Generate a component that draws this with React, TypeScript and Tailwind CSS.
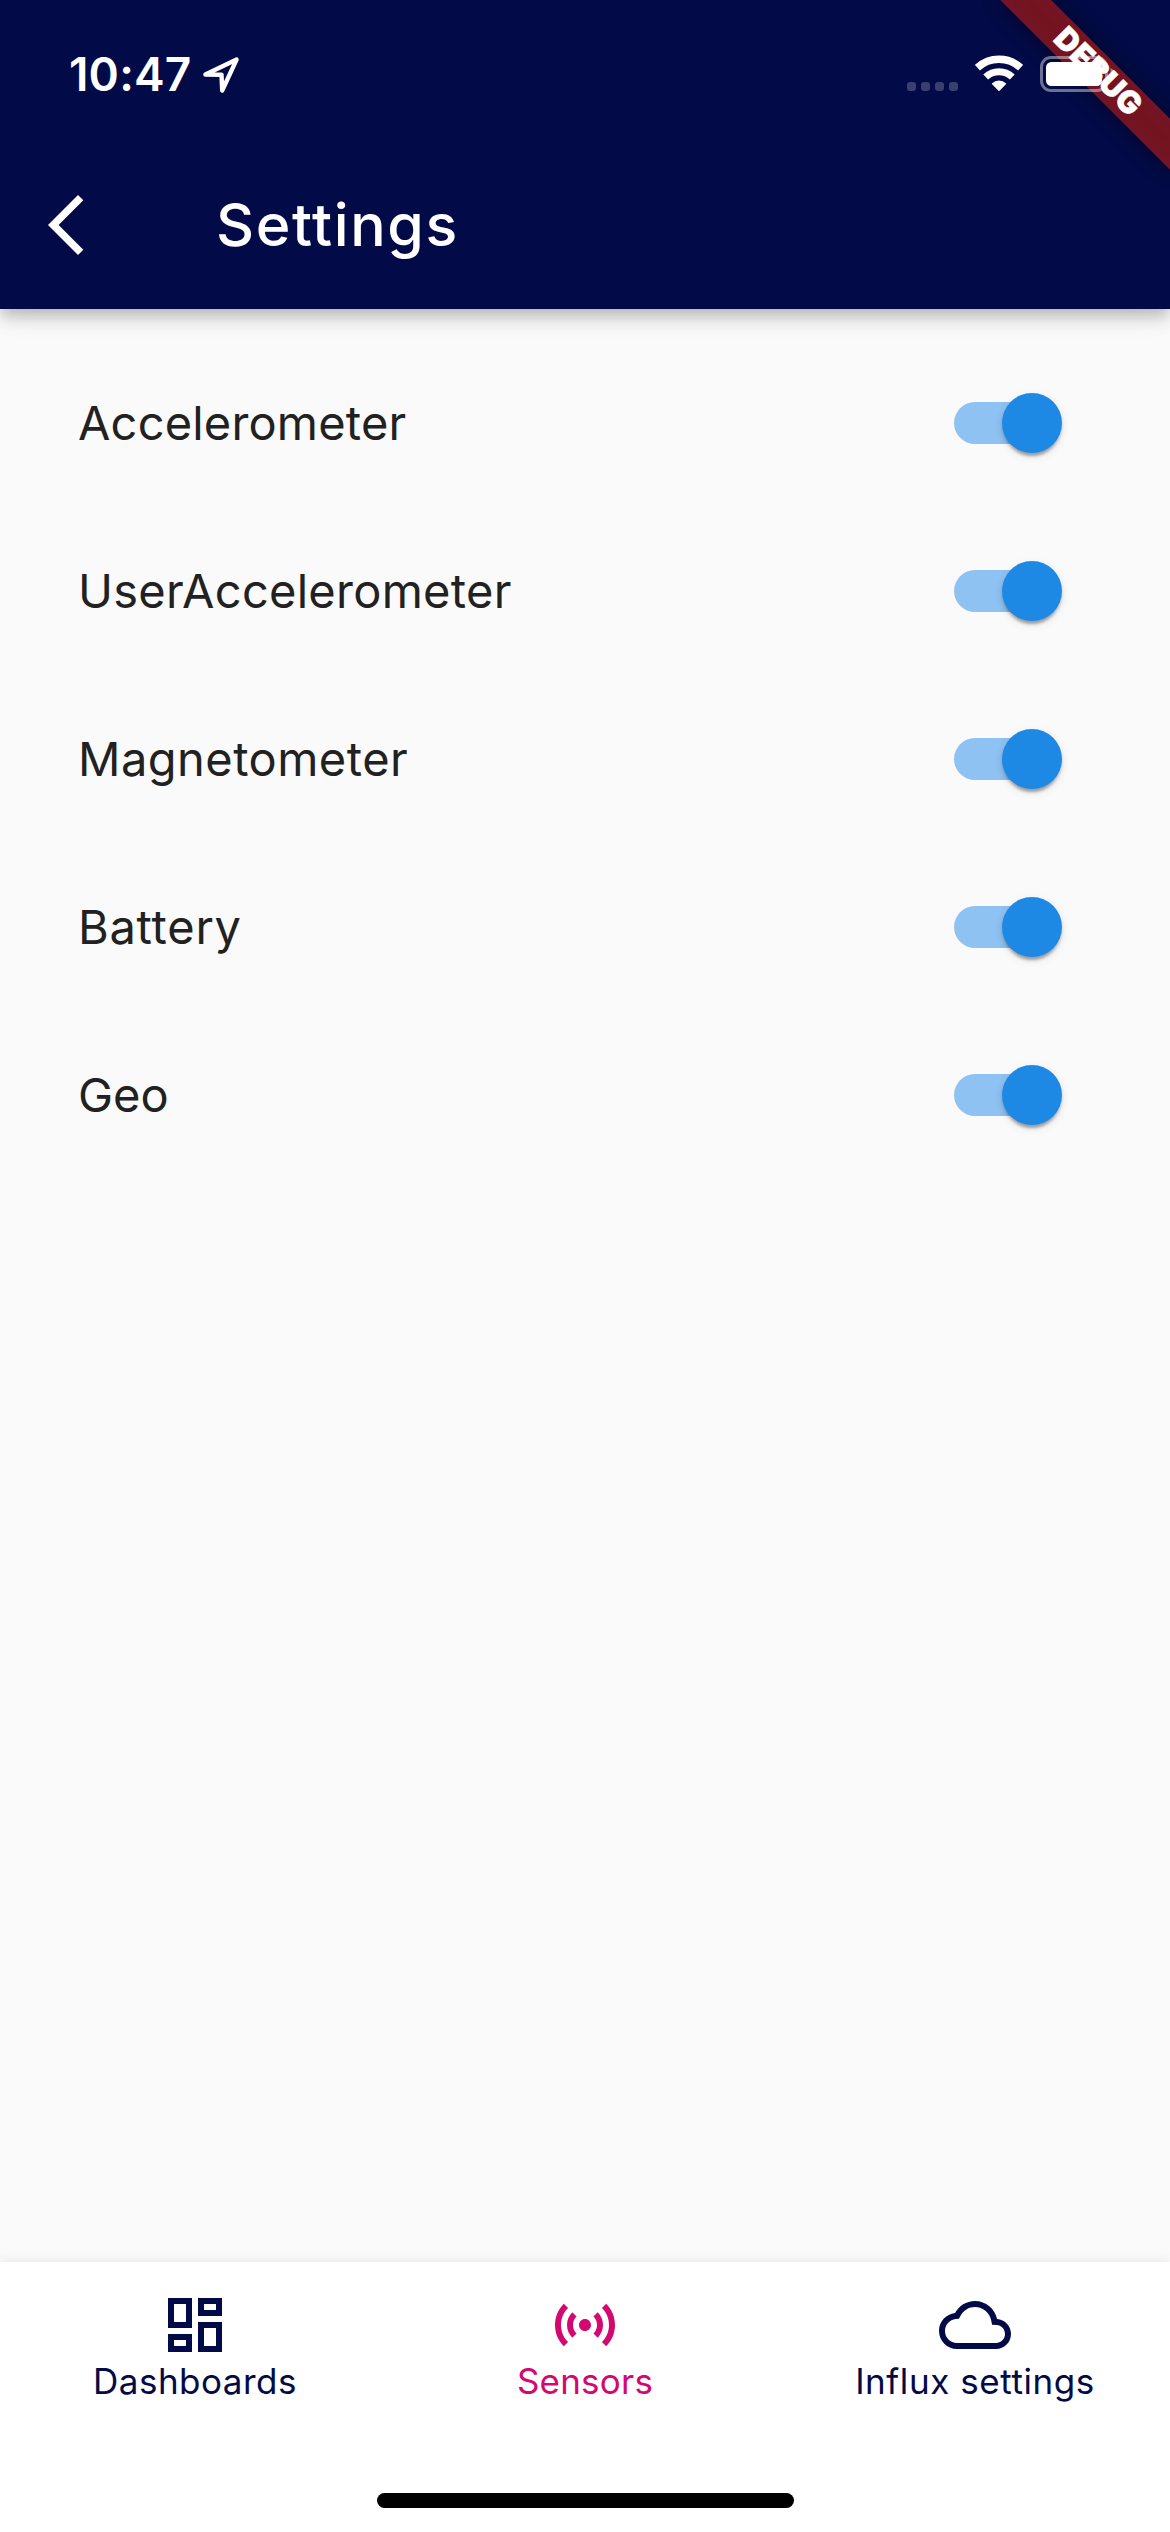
import React from "react";

const sensors = [
  { name: "Accelerometer", tracking: "tracking-[0.18px]" },
  { name: "UserAccelerometer", tracking: "tracking-[0.27px]" },
  { name: "Magnetometer", tracking: "tracking-[0.47px]" },
  { name: "Battery", tracking: "tracking-[0.74px]" },
  { name: "Geo", tracking: "tracking-[0.02px]" },
];

function LocationIcon() {
  return (
    <svg width="38" height="38" viewBox="0 0 38 38" fill="none" stroke="#fff" strokeWidth="4.4" strokeLinejoin="round">
      <path d="M3.4 18.5 L34.6 3.6 L20.2 34.5 L19.5 18.7 Z" />
    </svg>
  );
}

function WifiIcon() {
  return (
    <svg width="48" height="36" viewBox="0 0 48 36" fill="none" stroke="#fff">
      <path d="M2.4 12.7 A31.8 31.8 0 0 1 45.6 12.7" strokeWidth="7.5" />
      <path d="M10.7 22 A19.3 19.3 0 0 1 37.3 22" strokeWidth="6.9" />
      <path d="M24 35.2 L17.6 28.7 A9.6 9.6 0 0 1 30.4 28.7 Z" fill="#fff" strokeWidth="1.4" strokeLinejoin="round" />
    </svg>
  );
}

function BatteryIcon() {
  return (
    <svg width="75" height="36" viewBox="0 0 75 36">
      <rect x="1.5" y="1.5" width="65" height="33" rx="9.5" fill="none" stroke="#fff" strokeOpacity="0.42" strokeWidth="3" />
      <rect x="6" y="6" width="56" height="24" rx="5.5" fill="#fff" />
      <path d="M70.5 12 C75.5 14 75.5 22 70.5 24 Z" fill="#fff" fillOpacity="0.45" />
    </svg>
  );
}

function DebugBanner() {
  return (
    <div className="pointer-events-none absolute top-0 right-0 z-10 h-[260px] w-[260px] overflow-hidden">
      <div className="absolute top-[84px] left-[140px] h-9 w-[240px] origin-[120px_-84px] rotate-45">
        <div className="absolute inset-0 bg-black/50 blur-[11px]" />
        <div className="absolute inset-0 bg-[#b71c1c]/63" />
        <div className="relative -top-px text-center text-[31px] leading-[35px] font-black tracking-[0.4px] text-white [-webkit-text-stroke:0.6px_white]">
          DEBUG
        </div>
      </div>
    </div>
  );
}

function Toggle() {
  return (
    <div className="flex h-[60px] w-[108px] items-center">
      <div className="h-[42px] w-[99px] shrink-0 rounded-full bg-[#8ec2f2]" />
      <div className="-ml-[51px] h-[60px] w-[60px] shrink-0 rounded-full bg-[#1e88e5] shadow-[0_6px_3px_-3px_rgba(0,0,0,0.2),0_3px_3px_0_rgba(0,0,0,0.14),0_3px_9px_0_rgba(0,0,0,0.12)]" />
    </div>
  );
}

function DashboardIcon() {
  return (
    <svg width="72" height="72" viewBox="0 0 24 24" fill="currentColor">
      <path d="M19 5v2h-4V5h4M9 5v6H5V5h4m10 8v6h-4v-6h4M9 17v2H5v-2h4M21 3h-8v6h8V3zM11 3H3v10h8V3zm10 8h-8v10h8V11zm-10 4H3v6h8v-6z" />
    </svg>
  );
}

function SensorsIcon() {
  return (
    <svg width="72" height="72" viewBox="0 0 24 24" fill="currentColor">
      <path d="M7.76 16.24C6.67 15.16 6 13.66 6 12s.67-3.16 1.76-4.24l1.42 1.42C8.45 9.9 8 10.9 8 12c0 1.1.45 2.1 1.17 2.83l-1.41 1.41zm8.48 0C17.33 15.16 18 13.66 18 12s-.67-3.16-1.76-4.24l-1.42 1.42C15.55 9.9 16 10.9 16 12c0 1.1-.45 2.1-1.17 2.83l1.41 1.41zM12 10c-1.1 0-2 .9-2 2s.9 2 2 2 2-.9 2-2-.9-2-2-2zm8 2c0 2.21-.9 4.21-2.35 5.65l1.42 1.42C20.88 17.26 22 14.76 22 12s-1.12-5.26-2.93-7.07l-1.42 1.42C19.1 7.79 20 9.79 20 12zM6.35 6.35 4.93 4.93C3.12 6.74 2 9.24 2 12s1.12 5.26 2.93 7.07l1.42-1.42C4.9 16.21 4 14.21 4 12s.9-4.21 2.35-5.65z" />
    </svg>
  );
}

function CloudIcon() {
  return (
    <svg width="72" height="72" viewBox="0 0 24 24" fill="currentColor">
      <path d="M19.35 10.04C18.67 6.59 15.64 4 12 4 9.11 4 6.6 5.64 5.35 8.04 2.34 8.36 0 10.91 0 14c0 3.31 2.69 6 6 6h13c2.76 0 5-2.24 5-5 0-2.64-2.05-4.78-4.65-4.96zM19 18H6c-2.21 0-4-1.79-4-4 0-2.05 1.53-3.76 3.56-3.97l1.07-.11.5-.95C8.08 7.14 9.94 6 12 6c2.62 0 4.88 1.86 5.39 4.43l.3 1.5 1.53.11c1.56.1 2.78 1.41 2.78 2.96 0 1.65-1.35 3-3 3z" />
    </svg>
  );
}

const tabs = [
  { label: "Dashboards", Icon: DashboardIcon, color: "text-[#020a47]", tracking: "tracking-[0.5px]" },
  { label: "Sensors", Icon: SensorsIcon, color: "text-[#d30971]", tracking: "tracking-[0.22px]" },
  { label: "Influx settings", Icon: CloudIcon, color: "text-[#020a47]", tracking: "tracking-[0.57px]" },
];

export default function App() {
  return (
    <div className="relative flex h-[2532px] w-[1170px] flex-col overflow-hidden bg-[#fafafa] font-['Inter',sans-serif]">
      <header className="relative h-[309px] shrink-0 bg-[#020a47] text-white shadow-[0_6px_12px_-3px_rgba(0,0,0,0.16),0_12px_15px_0_rgba(0,0,0,0.1),0_3px_30px_0_rgba(0,0,0,0.09)]">
        <div className="flex h-[141px] items-start justify-between pr-[55px] pl-[69px]">
          <div className="flex pt-[46px]">
            <div className="w-[133px] text-[46px] leading-[56px] font-semibold tracking-[0.17px]">10:47</div>
            <div className="pt-[10px]">
              <LocationIcon />
            </div>
          </div>
          <div className="relative z-20 flex items-end gap-[17px] pt-[55px]">
            <div className="flex gap-[5px]">
              <span className="h-[9px] w-[9px] rounded-[3px] bg-white/22" />
              <span className="h-[9px] w-[9px] rounded-[3px] bg-white/22" />
              <span className="h-[9px] w-[9px] rounded-[3px] bg-white/22" />
              <span className="h-[9px] w-[9px] rounded-[3px] bg-white/22" />
            </div>
            <WifiIcon />
            <div className="-mb-px">
              <BatteryIcon />
            </div>
          </div>
        </div>
        <div className="flex h-[168px] items-center pl-[30px]">
          <svg width="72" height="72" viewBox="0 0 24 24" fill="#fff">
            <path d="M17.77 3.77 16 2 6 12l10 10 1.77-1.77L9.54 12z" />
          </svg>
          <h1 className="ml-[114px] text-[59px] leading-[70px] font-medium tracking-[1.6px]">Settings</h1>
        </div>
      </header>

      <main className="flex-1 pt-[30px]">
        {sensors.map((s) => (
          <div key={s.name} className="flex h-[168px] items-center justify-between pr-[108px] pl-[78px]">
            <span className={`text-[47px] leading-[56px] text-[#212121] ${s.tracking}`}>{s.name}</span>
            <Toggle />
          </div>
        ))}
      </main>

      <nav className="relative h-[270px] shrink-0 bg-white shadow-[0_0_12px_0_rgba(0,0,0,0.09)]">
        <div className="grid grid-cols-3 pt-[27px]">
          {tabs.map(({ label, Icon, color, tracking }) => (
            <div key={label} className={`flex flex-col items-center ${color}`}>
              <Icon />
              <span className={`-mt-px text-[35px] leading-[42px] ${tracking}`}>{label}</span>
            </div>
          ))}
        </div>
        <div className="mx-auto mt-[91px] h-[15px] w-[417px] rounded-full bg-black" />
      </nav>

      <DebugBanner />
    </div>
  );
}
